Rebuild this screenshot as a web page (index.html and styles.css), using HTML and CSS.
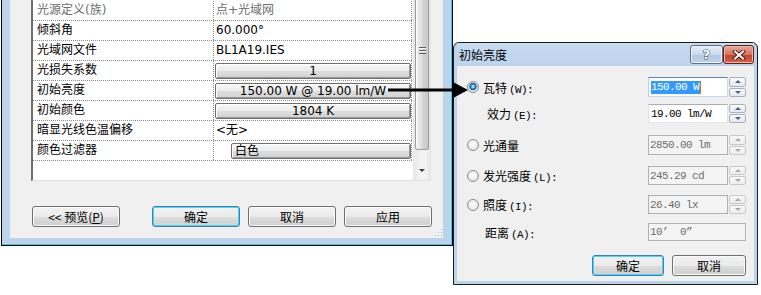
FILE: index.html
```html
<!DOCTYPE html>
<html lang="zh-CN">
<head>
<meta charset="UTF-8">
<title>初始亮度</title>
<link rel="stylesheet" href="styles.css">
</head>
<body>
<div class="stage">

  <!-- 类型属性窗口 -->
  <div class="props-win">
    <div class="props-client">
      <div class="listbox">
        <div class="grid">
          <div class="row dim"><div class="k">光源定义(族)</div><div class="v">点+光域网</div></div>
          <div class="row"><div class="k">倾斜角</div><div class="v">60.000°</div></div>
          <div class="row"><div class="k">光域网文件</div><div class="v">BL1A19.IES</div></div>
          <div class="row"><div class="k">光损失系数</div><div class="v btn-cell"><span class="cellbtn">1</span></div></div>
          <div class="row"><div class="k">初始亮度</div><div class="v btn-cell"><span class="cellbtn">150.00 W @ 19.00 lm/W</span></div></div>
          <div class="row"><div class="k">初始颜色</div><div class="v btn-cell"><span class="cellbtn">1804 K</span></div></div>
          <div class="row"><div class="k">暗显光线色温偏移</div><div class="v">&lt;无&gt;</div></div>
          <div class="row"><div class="k">颜色过滤器</div><div class="v swatch-cell"><span class="swatch"></span><span class="cellbtn left">白色</span></div></div>
        </div>
        <div class="vscroll">
          <div class="thumb"><span class="grip-lines"></span></div>
          <div class="track"></div>
          <div class="arrow-down"><span></span></div>
        </div>
      </div>

      <div class="actions">
        <button class="btn preview">&lt;&lt; 预览(<u>P</u>)</button>
        <button class="btn default">确定</button>
        <button class="btn">取消</button>
        <button class="btn">应用</button>
      </div>

      <svg class="sizegrip" width="8" height="8" viewBox="0 0 8 8">
        <g fill="#fff"><rect x="7" y="1" width="1" height="1"/><rect x="4" y="4" width="1" height="1"/><rect x="7" y="4" width="1" height="1"/><rect x="1" y="7" width="1" height="1"/><rect x="4" y="7" width="1" height="1"/><rect x="7" y="7" width="1" height="1"/></g>
        <g fill="#a9b6c6"><rect x="6" y="0" width="1" height="1"/><rect x="3" y="3" width="1" height="1"/><rect x="6" y="3" width="1" height="1"/><rect x="0" y="6" width="1" height="1"/><rect x="3" y="6" width="1" height="1"/><rect x="6" y="6" width="1" height="1"/></g>
      </svg>
    </div>
  </div>

  <!-- 初始亮度 对话框 -->
  <div class="dlg">
    <div class="dlg-title">
      <span class="dlg-caption">初始亮度</span>
      <span class="cap-btn help">?</span>
      <span class="cap-btn close">
        <svg width="14" height="10" viewBox="0 0 14 10">
          <path d="M3 1.5 L11 8.5 M11 1.5 L3 8.5" stroke="#5a1a10" stroke-width="4" stroke-linecap="square"/>
          <path d="M3 1.5 L11 8.5 M11 1.5 L3 8.5" stroke="#fff" stroke-width="2" stroke-linecap="square"/>
        </svg>
      </span>
    </div>
    <div class="dlg-body">
      <div class="opt r1">
        <span class="radio on"></span>
        <span class="lbl">瓦特<span class="m">(W):</span></span>
        <div class="field">
          <span class="inp focus"><span class="sel">150.00 W</span></span>
          <span class="spin"><i class="up"></i><i class="dn"></i></span>
        </div>
      </div>
      <div class="opt r2">
        <span class="lbl sub">效力<span class="m">(E):</span></span>
        <div class="field">
          <span class="inp">19.00 lm/W</span>
          <span class="spin"><i class="up"></i><i class="dn"></i></span>
        </div>
      </div>
      <div class="opt r3">
        <span class="radio"></span>
        <span class="lbl">光通量</span>
        <div class="field">
          <span class="inp off">2850.00 lm</span>
          <span class="spin off"><i class="up"></i><i class="dn"></i></span>
        </div>
      </div>
      <div class="opt r4">
        <span class="radio"></span>
        <span class="lbl">发光强度<span class="m">(L):</span></span>
        <div class="field">
          <span class="inp off">245.29 cd</span>
          <span class="spin off"><i class="up"></i><i class="dn"></i></span>
        </div>
      </div>
      <div class="opt r5">
        <span class="radio"></span>
        <span class="lbl">照度<span class="m">(I):</span></span>
        <div class="field">
          <span class="inp off">26.40 lx</span>
          <span class="spin off"><i class="up"></i><i class="dn"></i></span>
        </div>
      </div>
      <div class="opt r6">
        <span class="lbl dist">距离<span class="m">(A):</span></span>
        <div class="field">
          <span class="inp off wide">10’  0”</span>
        </div>
      </div>
      <div class="dlg-actions">
        <button class="btn default ok">确定</button>
        <button class="btn cancel">取消</button>
      </div>
    </div>
  </div>

  <!-- 指示箭头 -->
  <svg class="pointer" width="90" height="20" viewBox="0 0 90 20">
    <line x1="3" y1="10" x2="70" y2="10" stroke="#000" stroke-width="3"/>
    <polygon points="68,2 83,10 68,18" fill="#000"/>
  </svg>
</div>
</body>
</html>
```

FILE: styles.css
```css
* {
  box-sizing: border-box;
}

body {
  margin: 0;
  background-color: #ffffff;
  font-family: "DejaVu Sans", "Noto Sans CJK SC", sans-serif;
  font-size: 12px;
  color: #000;
}

.stage {
  position: relative;
  display: flex;
  align-items: flex-start;
  width: 761px;
  height: 295px;
  padding-left: 1px;
  overflow: hidden;
}

/* ---------- 属性窗口 ---------- */
.props-win {
  width: 452px;
  height: 246px;
  background-color: #bcd3ec;
  border: 1px solid #000;
  border-top: 0;
  padding: 0 9px 7px 8px;
  box-shadow: inset -1px -1px 0 #3ec6ee;
}

.props-client {
  position: relative;
  height: 100%;
  background-color: #f0f0f0;
  padding-left: 21px;
}

.listbox {
  display: flex;
  width: 400px;
  height: 181px;
  background-color: #fff;
  border-left: 2px solid #6e6e6e;
  border-right: 1px solid #e3e3e3;
  border-bottom: 1px solid #e3e3e3;
}

.grid {
  width: 380px;
  padding: 1px 1px 0 0;
}

.row {
  display: flex;
  height: 20px;
  border-bottom: 1px dotted #8c8c8c;
}

.k {
  width: 181px;
  padding-left: 4px;
  border-right: 1px dotted #8c8c8c;
  line-height: 19px;
  white-space: nowrap;
}

.v {
  flex: 1;
  padding-left: 2px;
  border-right: 1px dotted #8c8c8c;
  line-height: 19px;
  white-space: nowrap;
}

.row.dim {
  color: #6d6d6d;
}

.btn-cell,
.swatch-cell {
  padding: 2px 0 1px 1px;
}

.swatch-cell {
  display: flex;
}

.cellbtn {
  display: block;
  height: 16px;
  border: 1px solid #6f6f6f;
  border-radius: 2px;
  background: linear-gradient(#f7f7f7, #ececec 50%, #dedede 51%, #d2d2d2);
  box-shadow: inset 1px 1px 0 #ffffff, inset -1px -1px 0 #9a9a9a;
  text-align: center;
  line-height: 14px;
}

.swatch {
  width: 16px;
  height: 16px;
  background-color: #fff;
}

.cellbtn.left {
  flex: 1;
  text-align: left;
  padding-left: 3px;
}

/* 滚动条 */
.vscroll {
  display: flex;
  flex-direction: column;
  width: 17px;
  background: linear-gradient(90deg, #e6e6e6, #f3f3f3 40%, #f3f3f3 70%, #e8e8e8);
}

.thumb {
  height: 150px;
  margin: 0 1px 0 2px;
  border: 1px solid #9b9b9b;
  border-top: 0;
  border-radius: 0 0 3px 3px;
  background: linear-gradient(90deg, #f2f2f2, #e2e2e2 40%, #d2d2d2 60%, #c8c8c8);
  box-shadow: inset 1px 0 0 #ffffff;
  padding-top: 47px;
}

.grip-lines {
  display: block;
  width: 7px;
  height: 7px;
  margin-left: 3px;
  background: repeating-linear-gradient(#5e5e5e 0 1px, #f4f4f4 1px 2px, transparent 2px 3px);
}

.track {
  flex: 1;
}

.arrow-down {
  display: flex;
  justify-content: center;
  align-items: center;
  height: 19px;
  padding-left: 1px;
}

.arrow-down span {
  border-left: 3px solid transparent;
  border-right: 3px solid transparent;
  border-top: 3px solid #3c3c3c;
}

/* 按钮 */
.actions {
  display: flex;
  gap: 8px;
  margin-top: 25px;
  margin-left: 1px;
}

.btn {
  width: 88px;
  height: 21px;
  padding: 0;
  border: 1px solid #707070;
  border-radius: 3px;
  background: linear-gradient(#f2f2f2, #ebebeb 50%, #dddddd 51%, #cfcfcf);
  box-shadow: inset 0 0 0 1px #fbfbfb;
  font-family: "Noto Sans CJK SC", sans-serif;
  font-size: 12px;
  line-height: 18px;
  color: #000;
}

.btn u {
  text-decoration: underline;
}

.btn.preview {
  margin-right: 24px;
}

.btn.default {
  border-color: #3c7fb1;
  box-shadow: inset 0 0 0 1px #48d8fb;
}

.sizegrip {
  position: absolute;
  right: 0;
  bottom: 1px;
}

/* ---------- 对话框 ---------- */
.dlg {
  display: flex;
  flex-direction: column;
  width: 305px;
  height: 243px;
  margin-top: 42px;
  background-color: #bcd3ec;
  border: 1px solid #1c1c1c;
  border-radius: 6px 6px 0 0;
  padding: 0 3px 3px;
}

.dlg-title {
  display: flex;
  align-items: flex-start;
  height: 23px;
  padding-left: 2px;
  background: linear-gradient(#c7dbf1, #bcd3ec);
}

.dlg-caption {
  flex: 1;
  line-height: 23px;
  font-family: "Noto Sans CJK SC", sans-serif;
}

.cap-btn {
  display: flex;
  align-items: center;
  justify-content: center;
  height: 19px;
  margin-top: 2px;
  border: 1px solid #5d6f88;
  border-radius: 3px;
}

.cap-btn.help {
  width: 33px;
  background: linear-gradient(#e4edf7, #c9daee 50%, #b2c8e2 51%, #bed3ea);
  box-shadow: inset 0 0 0 1px #eef4fb;
  color: #fff;
  font-family: "DejaVu Sans", sans-serif;
  font-weight: bold;
  font-size: 13px;
  -webkit-text-stroke: 1px #37475c;
  paint-order: stroke fill;
}

.cap-btn.close {
  width: 31px;
  border-color: #5b2217;
  background: linear-gradient(#e9a99b, #d8735f 50%, #c4432b 51%, #d0664c);
  box-shadow: inset 0 0 0 1px #efb7aa;
}

.dlg-body {
  flex: 1;
  background-color: #f0f0f0;
  padding: 11px 8px 0 10px;
  font-family: "Noto Sans CJK SC", sans-serif;
}

.opt {
  display: flex;
  align-items: center;
  height: 19px;
}

.opt.r1 { height: 20px; }
.opt.r2 { margin-top: 7px; }
.opt.r3 { margin-top: 12px; height: 20px; }
.opt.r4 { margin-top: 11px; }
.opt.r5 { margin-top: 10px; }
.opt.r6 { margin-top: 9px; height: 18px; }

.radio {
  width: 12px;
  height: 12px;
  margin: 0 4px 0 0;
  border: 1px solid #8e8f8f;
  border-radius: 50%;
  background: radial-gradient(circle at 50% 45%, #ffffff, #ececec 55%, #cdcdcd);
}

.radio.on {
  background: radial-gradient(circle at 50% 45%, #a6e1fb 0 1px, #2c8fd8 2px, #0e5a9a 3.4px, #d6d6d6 3.8px, #f6f6f6);
}

.lbl .m {
  font-family: "Liberation Mono", monospace;
  font-size: 11px;
  letter-spacing: -0.6px;
  margin-left: 2px;
}

.lbl.sub {
  padding-left: 20px;
}

.lbl.dist {
  padding-left: 18px;
}

.field {
  display: flex;
  gap: 1px;
  height: 100%;
  margin-left: auto;
}

.inp {
  display: flex;
  align-items: center;
  width: 80px;
  height: 100%;
  padding-left: 2px;
  background-color: #fff;
  border: 1px solid;
  border-color: #abadb3 #dbdfe6 #e3e9ef #e2e3ea;
  font-family: "Liberation Mono", monospace;
  font-size: 11px;
  letter-spacing: -0.6px;
  white-space: pre;
}

.inp.focus {
  border-color: #5c83b4 #c5daed #c5daed #b7d0e8;
}

.inp .sel {
  display: inline-block;
  line-height: 13px;
  padding-right: 1px;
  background-color: #3399ff;
  color: #fff;
  border-right: 1px solid #e0701c;
}

.inp.off {
  padding-left: 1px;
  background-color: #f4f4f4;
  border-color: #adb2b5;
  color: #6d6d6d;
}

.inp.wide {
  width: 98px;
}

.spin {
  display: flex;
  flex-direction: column;
  gap: 1px;
  width: 17px;
}

.spin i {
  flex: 1;
  display: flex;
  align-items: center;
  justify-content: center;
  border: 1px solid #a7b0bd;
  border-radius: 2px;
  background: linear-gradient(#fbfbfb, #e4e9f0);
}

.spin i::after {
  content: "";
  border-left: 3px solid transparent;
  border-right: 3px solid transparent;
}

.spin .up::after {
  border-bottom: 3px solid #4a5f8c;
}

.spin .dn::after {
  border-top: 3px solid #4a5f8c;
}

.spin.off i {
  border-color: #c8c8c8;
  background: linear-gradient(#f8f8f8, #ededed);
}

.spin.off .up::after {
  border-bottom-color: #a8a8a8;
}

.spin.off .dn::after {
  border-top-color: #a8a8a8;
}

.dlg-actions {
  display: flex;
  justify-content: flex-end;
  gap: 8px;
  margin-top: 14px;
}

.btn.ok {
  width: 72px;
}

.btn.cancel {
  width: 74px;
}

/* 指示箭头 */
.pointer {
  position: absolute;
  left: 385px;
  top: 80px;
}
```
